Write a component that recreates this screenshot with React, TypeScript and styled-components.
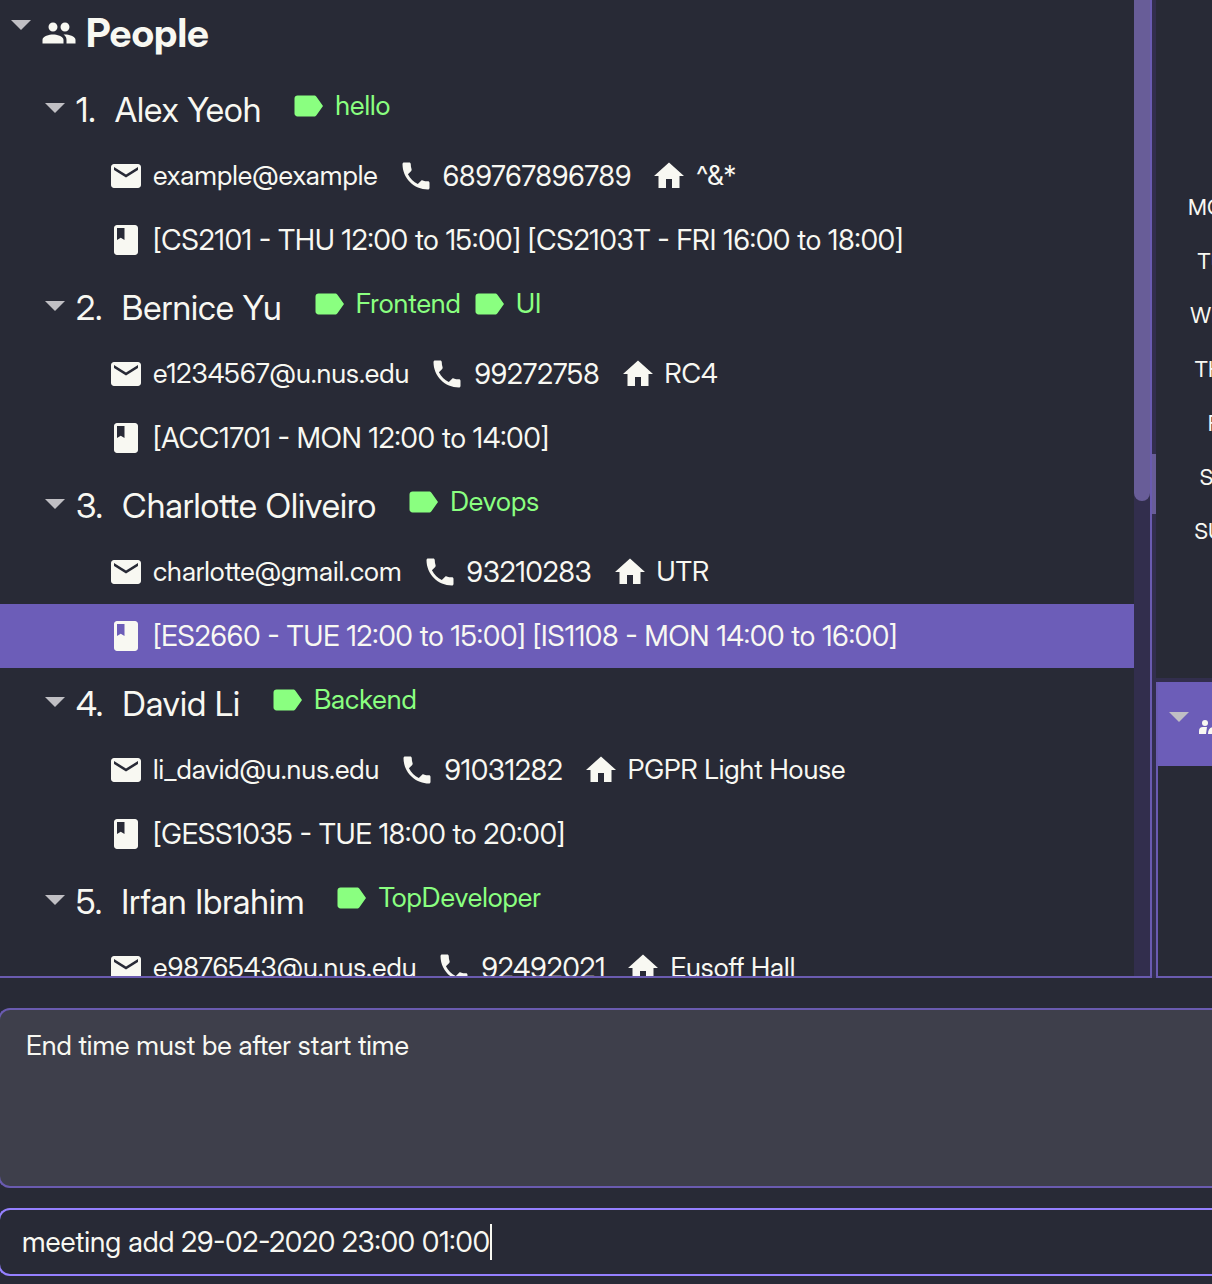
import React, { useState } from "react";
import styled, { createGlobalStyle } from "styled-components";

const color = {
  base: "#282a36",
  text: "#f8f8f2",
  green: "#8aff80",
  arrow: "#c0bfc4",
  accent: "#6c5db8",
  border: "#6a5bb0",
  focus: "#9580ff",
  thumb: "#685d98",
  track: "#322e4d",
  result: "#3e3f4b",
};

const GlobalStyle = createGlobalStyle`
  *, *::before, *::after { box-sizing: border-box; }
  body {
    margin: 0;
    background: ${color.base};
    color: ${color.text};
    font-family: "Inter Display", Inter, "Liberation Sans", sans-serif;
    overflow: hidden;
  }
`;

const Window = styled.div`
  display: flex;
  flex-direction: column;
  height: 100vh;
  padding-bottom: 8px;
`;

const SplitPane = styled.div`
  display: flex;
  flex: 1;
  min-height: 0;
`;

const ListPane = styled.section`
  display: flex;
  flex: 1;
  min-width: 0;
  border-bottom: 2px solid ${color.border};
  border-right: 2px solid ${color.border};
`;

const Tree = styled.main`
  flex: 1;
  min-width: 0;
  overflow: hidden;
`;

const ScrollTrack = styled.div`
  width: 16px;
  background: ${color.track};
`;

const ScrollThumb = styled.div`
  height: 501px;
  border-radius: 0 0 8px 8px;
  background: ${color.thumb};
`;

const Splitter = styled.div`
  display: flex;
  flex-direction: column;
  justify-content: center;
  width: 4px;
  padding-bottom: 10px;
  background: ${color.track};
`;

const SplitterGrip = styled.div`
  height: 60px;
  background: ${color.thumb};
`;

const SidePane = styled.aside`
  display: flex;
  flex-direction: column;
  width: 56px;
  overflow: hidden;
`;

const Calendar = styled.div`
  flex: 1;
  width: 83px;
  padding-top: 180px;
`;

const Weekday = styled.div`
  font-size: 22px;
  line-height: 54px;
  text-align: right;
`;

const SideSplitter = styled.div`
  height: 4px;
  background: ${color.track};
`;

const MeetingsPanel = styled.div`
  height: 296px;
  border-left: 2px solid ${color.border};
  border-bottom: 2px solid ${color.border};
`;

const MeetingsHeader = styled.div`
  display: flex;
  gap: 8px;
  height: 84px;
  padding: 30px 11px;
  background: ${color.accent};
`;

const Heading = styled.div`
  display: flex;
  align-items: center;
  gap: 9px;
  height: 74px;
  padding: 0 11px 8px;
`;

const Title = styled.h1`
  margin: 0;
  font-size: 39px;
  font-weight: 700;
  line-height: 48px;
`;

const ToggleButton = styled.button`
  display: flex;
  flex: none;
  align-self: flex-start;
  width: 21px;
  padding: 0;
  border: 0;
  background: none;
  color: ${color.arrow};
`;

const HeadingToggle = styled(ToggleButton)`
  padding-top: 20px;
`;

const PersonToggle = styled(ToggleButton)`
  padding-top: 29px;
`;

const PersonRow = styled.div`
  display: flex;
  align-items: center;
  height: 70px;
  padding-left: 45px;
`;

const PersonName = styled.h2`
  display: flex;
  gap: 19px;
  margin: 0 29px 0 10px;
  padding-top: 2px;
  font-size: 34px;
  font-weight: 400;
  line-height: 44px;
  white-space: nowrap;
`;

const Tags = styled.div`
  display: flex;
  gap: 10px;
  padding-bottom: 6px;
  color: ${color.green};
`;

const DetailRow = styled.div<{ $selected?: boolean }>`
  display: flex;
  align-items: center;
  gap: 20px;
  height: 64px;
  padding-left: 108px;
  background: ${(p) => (p.$selected ? color.accent : "transparent")};
`;

const Detail = styled.span<{ $numeric?: boolean }>`
  display: flex;
  align-items: center;
  gap: 9px;
  font-size: ${(p) => (p.$numeric ? 28 : 27)}px;
  line-height: 36px;
  white-space: nowrap;
`;

const ResultBox = styled.output`
  display: block;
  height: 180px;
  margin: 30px 0 20px -2px;
  padding: 18px 26px;
  border: 2px solid ${color.border};
  border-right: 0;
  border-radius: 12px 0 0 12px;
  background: ${color.result};
  font-size: 27px;
  line-height: 36px;
`;

const CommandBox = styled.label`
  display: flex;
  align-items: center;
  height: 68px;
  margin-left: -2px;
  padding-left: 22px;
  border: 2px solid ${color.focus};
  border-right: 0;
  border-radius: 12px 0 0 12px;
`;

const CommandInput = styled.input`
  field-sizing: content;
  padding: 0;
  border: 0;
  outline: 0;
  background: none;
  color: inherit;
  caret-color: transparent;
  font-family: inherit;
  font-size: 28px;
  line-height: 36px;
`;

const Caret = styled.span`
  width: 2px;
  height: 36px;
  background: ${color.text};
`;

const icons = {
  people:
    "M16 11c1.66 0 2.99-1.34 2.99-3S17.66 5 16 5c-1.66 0-3 1.34-3 3s1.34 3 3 3zm-8 0c1.66 0 2.99-1.34 2.99-3S9.66 5 8 5C6.34 5 5 6.34 5 8s1.34 3 3 3zm0 2c-2.33 0-7 1.17-7 3.5V19h14v-2.500c0-2.330-4.670-3.500-7-3.500zm8 0c-.29 0-.62.02-.97.05 1.160.84 1.970 1.970 1.970 3.450V19h6v-2.500c0-2.330-4.670-3.500-7-3.500z",
  mail: "M20 4H4c-1.100 0-1.990.9-1.990 2L2 18c0 1.100.9 2 2 2h16c1.100 0 2-.9 2-2V6c0-1.100-.9-2-2-2zm0 4l-8 5-8-5V6l8 5 8-5v2z",
  phone:
    "M6.620 10.790c1.440 2.830 3.760 5.140 6.590 6.590l2.200-2.200c.27-.27.67-.36 1.020-.24 1.120.37 2.330.57 3.570.57.55 0 1 .45 1 1V20c0 .55-.45 1-1 1-9.390 0-17-7.610-17-17 0-.55.45-1 1-1h3.500c.55 0 1 .45 1 1 0 1.250.2 2.450.57 3.570.11.35.03.74-.25 1.020l-2.200 2.200z",
  home: "M10 20v-6h4v6h5v-8h3L12 3 2 12h3v8z",
  book: "M18 2H6c-1.100 0-2 .9-2 2v16c0 1.100.9 2 2 2h12c1.100 0 2-.9 2-2V4c0-1.100-.9-2-2-2zM6 4h5v8l-2.500-1.500L6 12V4z",
  label:
    "M17.630 5.840C17.270 5.330 16.670 5 16 5L5 5.010C3.900 5.010 3 5.900 3 7v10c0 1.100.9 1.990 2 1.990L16 19c.67 0 1.270-.33 1.630-.84L22 12l-4.370-6.160z",
};

const Glyph = styled.svg`
  flex: none;
  fill: currentColor;
`;

const Icon = ({ name }: { name: keyof typeof icons }) => (
  <Glyph width="36" height="36" viewBox="0 0 24 24" aria-hidden="true">
    <path d={icons[name]} />
  </Glyph>
);

const Arrow = () => (
  <Glyph width="20" height="10" viewBox="0 0 20 10" aria-hidden="true">
    <path d="M0 0h20L10 10z" />
  </Glyph>
);

const MeetingIcon = () => (
  <Glyph width="36" height="26" viewBox="0 0 36 26" aria-hidden="true">
    <circle cx="7" cy="11" r="3" />
    <path d="M1 22v-3q0-4 4-4h4l-1 7zM10 22q0-7 6-7h6v7z" />
  </Glyph>
);

interface Person {
  name: string;
  tags: string[];
  email: string;
  phone: string;
  address: string;
  classes: string;
}

const people: Person[] = [
  { name: "Alex Yeoh", tags: ["hello"], email: "example@example", phone: "689767896789", address: "^&*", classes: "[CS2101 - THU 12:00 to 15:00] [CS2103T - FRI 16:00 to 18:00]" },
  { name: "Bernice Yu", tags: ["Frontend", "UI"], email: "e1234567@u.nus.edu", phone: "99272758", address: "RC4", classes: "[ACC1701 - MON 12:00 to 14:00]" },
  { name: "Charlotte Oliveiro", tags: ["Devops"], email: "charlotte@gmail.com", phone: "93210283", address: "UTR", classes: "[ES2660 - TUE 12:00 to 15:00] [IS1108 - MON 14:00 to 16:00]" },
  { name: "David Li", tags: ["Backend"], email: "li_david@u.nus.edu", phone: "91031282", address: "PGPR Light House", classes: "[GESS1035 - TUE 18:00 to 20:00]" },
  { name: "Irfan Ibrahim", tags: ["TopDeveloper"], email: "e9876543@u.nus.edu", phone: "92492021", address: "Eusoff Hall", classes: "" },
];

const weekdays = ["MON", "TUE", "WED", "THU", "FRI", "SAT", "SUN"];

export default function App() {
  const [command, setCommand] = useState("meeting add 29-02-2020 23:00 01:00");
  const [selected, setSelected] = useState(2);

  return (
    <>
      <GlobalStyle />
      <Window>
        <SplitPane>
          <ListPane>
            <Tree>
              <Heading>
                <HeadingToggle aria-label="Collapse people"><Arrow /></HeadingToggle>
                <Icon name="people" />
                <Title>People</Title>
              </Heading>
              {people.map((p, i) => (
                <React.Fragment key={p.name}>
                  <PersonRow>
                    <PersonToggle aria-label={`Collapse ${p.name}`}><Arrow /></PersonToggle>
                    <PersonName><span>{i + 1}.</span><span>{p.name}</span></PersonName>
                    <Tags>
                      {p.tags.map((tag) => (
                        <Detail key={tag}><Icon name="label" />{tag}</Detail>
                      ))}
                    </Tags>
                  </PersonRow>
                  <DetailRow>
                    <Detail><Icon name="mail" />{p.email}</Detail>
                    <Detail $numeric><Icon name="phone" />{p.phone}</Detail>
                    <Detail><Icon name="home" />{p.address}</Detail>
                  </DetailRow>
                  {p.classes && (
                    <DetailRow $selected={i === selected} onClick={() => setSelected(i)}>
                      <Detail $numeric><Icon name="book" />{p.classes}</Detail>
                    </DetailRow>
                  )}
                </React.Fragment>
              ))}
            </Tree>
            <ScrollTrack><ScrollThumb /></ScrollTrack>
          </ListPane>
          <Splitter><SplitterGrip /></Splitter>
          <SidePane>
            <Calendar>
              {weekdays.map((d) => <Weekday key={d}>{d}</Weekday>)}
            </Calendar>
            <SideSplitter />
            <MeetingsPanel>
              <MeetingsHeader>
                <ToggleButton aria-label="Collapse meetings"><Arrow /></ToggleButton>
                <MeetingIcon />
              </MeetingsHeader>
            </MeetingsPanel>
          </SidePane>
        </SplitPane>
        <ResultBox>End time must be after start time</ResultBox>
        <CommandBox>
          <CommandInput aria-label="Command" value={command} onChange={(e) => setCommand(e.target.value)} />
          <Caret />
        </CommandBox>
      </Window>
    </>
  );
}
